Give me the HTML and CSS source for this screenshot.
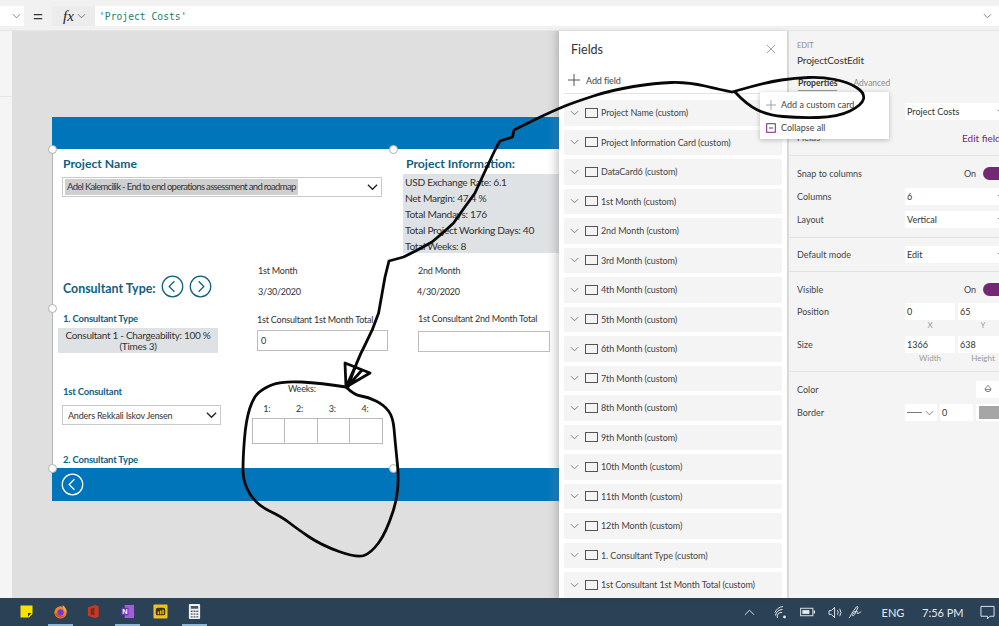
FILE: index.html
```html
<!DOCTYPE html>
<html lang="en">
<head>
<meta charset="utf-8">
<title>Project Costs</title>
<link rel="stylesheet" href="styles.css">
</head>
<body>
<div class="app">
  <header class="formula">
    <div class="prop-drop"><svg class="chev-sm" viewBox="0 0 10 6"><path d="M1 1l4 4 4-4"/></svg></div>
    <div class="equals">=</div>
    <div class="fx"><i>fx</i><svg class="chev-sm" viewBox="0 0 10 6"><path d="M1 1l4 4 4-4"/></svg></div>
    <div class="formula-input"><span>'Project Costs'</span><svg class="chev-sm" viewBox="0 0 10 6"><path d="M1 1l4 4 4-4"/></svg></div>
  </header>

  <main class="main">
    <aside class="rail"><div class="rail-top"></div></aside>

    <section class="canvas">
      <div class="form">
        <div class="form-head"></div>
        <div class="form-body">
          <div class="ctl h-name">Project Name</div>
          <div class="ctl combo combo-project"><span class="chip">Adel Kalemcilik - End to end operations assessment and roadmap</span><svg class="chev-lg" viewBox="0 0 12 8"><path d="M1 1.5l5 5 5-5"/></svg></div>
          <div class="ctl h-info">Project Information:</div>
          <div class="ctl info-box">
            <div>USD Exchange Rate: 6.1</div>
            <div>Net Margin: 47.4 %</div>
            <div>Total Mandays: 176</div>
            <div>Total Project Working Days: 40</div>
            <div>Total Weeks: 8</div>
          </div>
          <div class="ctl h-type">Consultant Type:</div>
          <svg class="ctl nav nav-prev" viewBox="0 0 24 24"><circle cx="12" cy="12" r="10.7"/><path d="M14 6.5L8.5 12l5.5 5.5"/></svg>
          <svg class="ctl nav nav-next" viewBox="0 0 24 24"><circle cx="12" cy="12" r="10.7"/><path d="M10 6.5l5.5 5.5-5.5 5.5"/></svg>
          <div class="ctl small m1">1st Month</div>
          <div class="ctl small m2">2nd Month</div>
          <div class="ctl small d1">3/30/2020</div>
          <div class="ctl small d2">4/30/2020</div>
          <div class="ctl sub s1">1. Consultant Type</div>
          <div class="ctl type-box">Consultant 1 - Chargeability: 100 %<br>(Times 3)</div>
          <div class="ctl small t1">1st Consultant 1st Month Total</div>
          <div class="ctl small t2">1st Consultant 2nd Month Total</div>
          <div class="ctl field f1">0</div>
          <div class="ctl field f2"></div>
          <div class="ctl sub s2">1st Consultant</div>
          <div class="ctl combo combo-person"><span>Anders Rekkali Iskov Jensen</span><svg class="chev-lg" viewBox="0 0 12 8"><path d="M1 1.5l5 5 5-5"/></svg></div>
          <div class="ctl small weeks">Weeks:</div>
          <div class="ctl week-grid">
            <div class="wk">1:</div><div class="wk">2:</div><div class="wk">3:</div><div class="wk">4:</div>
            <div class="cell"></div><div class="cell"></div><div class="cell"></div><div class="cell"></div>
          </div>
          <div class="ctl sub s3">2. Consultant Type</div>
        </div>
        <div class="form-foot">
          <svg class="back" viewBox="0 0 24 24"><circle cx="12" cy="12" r="10.7"/><path d="M14 6.5L8.5 12l5.5 5.5"/></svg>
        </div>
        <span class="handle hd1"></span><span class="handle hd2"></span><span class="handle hd3"></span><span class="handle hd4"></span><span class="handle hd5"></span>
      </div>
      <div class="edge-shade"></div>
    </section>

    <section class="fields">
      <div class="fields-title"><span>Fields</span><svg class="close" viewBox="0 0 12 12"><path d="M1 1l10 10M11 1L1 11"/></svg></div>
      <div class="add-field"><svg class="plus" viewBox="0 0 12 12"><path d="M6 0v12M0 6h12"/></svg><span>Add field</span></div>
      <div class="field-list">
        <div class="frow"><svg class="chev-sm" viewBox="0 0 10 6"><path d="M1 1l4 4 4-4"/></svg><b class="sq"></b><span>Project Name (custom)</span></div>
        <div class="frow"><svg class="chev-sm" viewBox="0 0 10 6"><path d="M1 1l4 4 4-4"/></svg><b class="sq"></b><span>Project Information Card (custom)</span></div>
        <div class="frow"><svg class="chev-sm" viewBox="0 0 10 6"><path d="M1 1l4 4 4-4"/></svg><b class="sq"></b><span>DataCard6 (custom)</span></div>
        <div class="frow"><svg class="chev-sm" viewBox="0 0 10 6"><path d="M1 1l4 4 4-4"/></svg><b class="sq"></b><span>1st Month (custom)</span></div>
        <div class="frow"><svg class="chev-sm" viewBox="0 0 10 6"><path d="M1 1l4 4 4-4"/></svg><b class="sq"></b><span>2nd Month (custom)</span></div>
        <div class="frow"><svg class="chev-sm" viewBox="0 0 10 6"><path d="M1 1l4 4 4-4"/></svg><b class="sq"></b><span>3rd Month (custom)</span></div>
        <div class="frow"><svg class="chev-sm" viewBox="0 0 10 6"><path d="M1 1l4 4 4-4"/></svg><b class="sq"></b><span>4th Month (custom)</span></div>
        <div class="frow"><svg class="chev-sm" viewBox="0 0 10 6"><path d="M1 1l4 4 4-4"/></svg><b class="sq"></b><span>5th Month (custom)</span></div>
        <div class="frow"><svg class="chev-sm" viewBox="0 0 10 6"><path d="M1 1l4 4 4-4"/></svg><b class="sq"></b><span>6th Month (custom)</span></div>
        <div class="frow"><svg class="chev-sm" viewBox="0 0 10 6"><path d="M1 1l4 4 4-4"/></svg><b class="sq"></b><span>7th Month (custom)</span></div>
        <div class="frow"><svg class="chev-sm" viewBox="0 0 10 6"><path d="M1 1l4 4 4-4"/></svg><b class="sq"></b><span>8th Month (custom)</span></div>
        <div class="frow"><svg class="chev-sm" viewBox="0 0 10 6"><path d="M1 1l4 4 4-4"/></svg><b class="sq"></b><span>9th Month (custom)</span></div>
        <div class="frow"><svg class="chev-sm" viewBox="0 0 10 6"><path d="M1 1l4 4 4-4"/></svg><b class="sq"></b><span>10th Month (custom)</span></div>
        <div class="frow"><svg class="chev-sm" viewBox="0 0 10 6"><path d="M1 1l4 4 4-4"/></svg><b class="sq"></b><span>11th Month (custom)</span></div>
        <div class="frow"><svg class="chev-sm" viewBox="0 0 10 6"><path d="M1 1l4 4 4-4"/></svg><b class="sq"></b><span>12th Month (custom)</span></div>
        <div class="frow"><svg class="chev-sm" viewBox="0 0 10 6"><path d="M1 1l4 4 4-4"/></svg><b class="sq"></b><span>1. Consultant Type (custom)</span></div>
        <div class="frow"><svg class="chev-sm" viewBox="0 0 10 6"><path d="M1 1l4 4 4-4"/></svg><b class="sq"></b><span>1st Consultant 1st Month Total (custom)</span></div>
      </div>
    </section>

    <aside class="props">
      <div class="props-head">
        <div class="eyebrow">EDIT</div>
        <div class="ctl-name">ProjectCostEdit</div>
        <div class="tabs"><span class="tab active">Properties</span><span class="tab">Advanced</span></div>
      </div>
      <div class="sec sec-a">
        <div class="prow"><label>Data source</label><div class="sel">Project Costs<svg class="chev-xs" viewBox="0 0 10 6"><path d="M1 1l4 4 4-4"/></svg></div></div>
        <div class="prow"><label>Fields</label><a class="edit-link">Edit fields</a></div>
      </div>
      <div class="sec">
        <div class="prow"><label>Snap to columns</label><div class="toggle-wrap"><span>On</span><b class="toggle"></b></div></div>
        <div class="prow"><label>Columns</label><div class="sel">6<svg class="chev-xs" viewBox="0 0 10 6"><path d="M1 1l4 4 4-4"/></svg></div></div>
        <div class="prow"><label>Layout</label><div class="sel">Vertical<svg class="chev-xs" viewBox="0 0 10 6"><path d="M1 1l4 4 4-4"/></svg></div></div>
      </div>
      <div class="sec sec-c">
        <div class="prow"><label>Default mode</label><div class="sel">Edit<svg class="chev-xs" viewBox="0 0 10 6"><path d="M1 1l4 4 4-4"/></svg></div></div>
      </div>
      <div class="sec sec-d">
        <div class="prow"><label>Visible</label><div class="toggle-wrap"><span>On</span><b class="toggle"></b></div></div>
        <div class="prow pair"><label>Position</label><div class="pair-fields"><div class="num">0<small>X</small></div><div class="num">65<small>Y</small></div></div></div>
        <div class="prow pair"><label>Size</label><div class="pair-fields"><div class="num">1366<small>Width</small></div><div class="num">638<small>Height</small></div></div></div>
      </div>
      <div class="sec sec-e">
        <div class="prow"><label>Color</label><div class="color-btn"><svg viewBox="0 0 12 12"><path d="M6 1.5l3.5 4.2a3.4 3.4 0 1 1-7 0z M3 6.5h6"/></svg></div></div>
        <div class="prow"><label>Border</label><div class="border-tools"><div class="line-sel"><i></i><svg class="chev-sm" viewBox="0 0 10 6"><path d="M1 1l4 4 4-4"/></svg></div><div class="border-num">0</div><div class="swatch-box"><b></b></div></div></div>
      </div>
    </aside>

    <div class="popup">
      <div class="pop-item"><svg class="plus plus-grey" viewBox="0 0 12 12"><path d="M6 0v12M0 6h12"/></svg><span>Add a custom card</span></div>
      <div class="pop-item"><svg class="collapse" viewBox="0 0 10 10"><rect x="0.7" y="0.7" width="8.6" height="8.6"/><path d="M3 5h4"/></svg><span>Collapse all</span></div>
    </div>
  </main>

  <footer class="taskbar">
    <div class="task-apps">
      <div class="tapp"><svg viewBox="-1.5 -1.5 15 15"><path fill="#f7e200" d="M0 0h12v8.5L8.500 12H0z"/><path fill="#2b2b1c" d="M7.500 7.500H11L7.500 11z"/></svg></div>
      <div class="tapp on"><svg viewBox="0 0 16 16"><circle cx="8" cy="9" r="6.5" fill="#f5832a"/><path fill="#ffb02e" d="M10 1c3 2 5 5 4.500 8L11 5z"/><circle cx="8" cy="9" r="3.400" fill="#6a3fc4"/><path fill="#e8462f" d="M2 11c2 4 8 5 11 1-3 1.500-7 1-8-3z"/></svg></div>
      <div class="tapp"><svg viewBox="0 0 14 16"><path fill="#c8391f" d="M1 3.500L8.500 1l4 1.500v11l-4 1.500L1 12.500z"/><path fill="#7d2a1e" d="M4 5l4-1v8l-4-1z"/></svg></div>
      <div class="tapp on"><svg viewBox="0 0 16 16"><path fill="#a45fd8" d="M5 1h10v14H5z"/><path fill="#6f2da8" d="M1 4h8v8H1z"/><text x="2.500" y="10.500" class="n-letter">N</text></svg></div>
      <div class="tapp"><svg viewBox="0 0 16 16"><rect x="0.500" y="0.500" width="15" height="15" rx="1" fill="#eec21c"/><rect x="3" y="4" width="10" height="8" rx="2" fill="#3d3418"/><path fill="#eec21c" d="M5 8h1.500v3H5zM7.500 7H9v4H7.500zM10 6h1.500v5H10z"/></svg></div>
      <div class="tapp on"><svg viewBox="0 0 12 16"><rect width="12" height="16" rx="1" fill="#f1f1f1"/><path fill="#4a5a68" d="M2 2h8v3H2zM2 7h2v1.500H2zM5 7h2v1.500H5zM8 7h2v1.500H8zM2 10h2v1.500H2zM5 10h2v1.500H5zM8 10h2v1.500H8zM2 13h2v1.500H2zM5 13h2v1.500H5zM8 13h2v1.500H8z"/></svg></div>
    </div>
    <div class="tray">
      <svg class="tray-chev" viewBox="0 0 12 7"><path d="M1 6l5-5 5 5"/></svg>
      <svg class="tray-wifi" viewBox="0 0 14 14"><path d="M1 7.500A10 10 0 0 1 9 1.500M1.500 10.500A7 7 0 0 1 8.500 4.500M3.500 13A4 4 0 0 1 8 7.500"/><circle cx="10.500" cy="12" r="1.400"/></svg>
      <svg class="tray-batt" viewBox="0 0 16 10"><rect x="0.700" y="1" width="13" height="8"/><path class="fill" d="M2.500 3h7.500v4H2.500z"/><path class="fill" d="M14.500 3.500H16v3h-1.500z"/></svg>
      <svg class="tray-vol" viewBox="0 0 16 14"><path d="M1 5h2.500L7 1.500v11L3.500 9H1zM10 4.500a4 4 0 0 1 0 5M12.500 3a7 7 0 0 1 0 8"/></svg>
      <svg class="tray-pen" viewBox="0 0 16 16"><path d="M1 14c1-1 2-3 3-5l5-7c1-1 2 0 1.500 1L7 10c-1 2-3 2-2 0 1-3 4-4 5-3 .5 1-1 2 0 2s3-1 4-2"/></svg>
      <span class="lang">ENG</span>
      <span class="clock">7:56 PM</span>
      <svg class="tray-note" viewBox="0 0 16 16"><path d="M1 1.500h14v10.500h-4.500L8 14.800 8 12H1z"/></svg>
    </div>
  </footer>

  <svg class="scribble" viewBox="0 0 999 626">
    <path d="M735 92Q747 105 757.500 110Q768 115 783 116.500Q798 118 818 117.500Q838 117 850 111Q862 105 863.500 99Q865 93 856.500 87.500Q848 82 835 79.500Q822 77 808.500 77.500Q795 78 781.500 80Q768 82 750 87L732 92Q722 90 705 86Q688 82 671.500 82.500Q655 83 633.500 86.500Q612 90 593.500 96Q575 102 565 106Q555 110 534 120L514 130L512.500 137L500 141L495 150Q485 171 475 193Q464 208 453.600 223Q443 233 432 242Q418 250 403.600 257L389 261L385 277L378.600 313Q373 330 365 345Q357 360 348 387"/>
    <path d="M345 363L370 373L346 387ZM355 367L346 387M362 370L347 387"/>
    <path d="M346 387Q321 383 301.500 382Q282 381 273 384.500Q264 388 258.750 392.500Q253.500 397 249.750 408.500Q246 420 244.500 438.500Q243 457 243 470Q243 483 250 494Q257 505 269.500 511Q282 517 289 522.500Q296 528 308.500 536.500Q321 545 339 551.500Q357 558 364 555.500Q371 553 378.500 543Q386 533 393 511.500Q400 490 397.500 465Q395 440 394 428.500Q393 417 388.500 411Q384 405 376 401Q368 397 361 396Q354 395 346 387"/>
  </svg>
</div>
</body>
</html>
```

FILE: styles.css
```css
* { box-sizing: border-box; }
html, body { margin: 0; height: 100%; overflow: hidden; }
body { font-family: Lato, "Open Sans", sans-serif; color: #333; background: #f3f3f3; }
.app { position: relative; width: 999px; height: 626px; display: flex; flex-direction: column; overflow: hidden; }
svg { display: block; }
.chev-sm { width: 9px; height: 6px; flex: none; fill: none; stroke: #777; stroke-width: 1; }
.chev-xs { width: 8px; height: 5px; flex: none; fill: none; stroke: #666; stroke-width: 1; }
.chev-lg { width: 11px; height: 8px; flex: none; fill: none; stroke: #222; stroke-width: 1.4; }

/* formula bar */
.formula { height: 31px; flex: none; display: flex; align-items: stretch; padding: 6px 0 4px; background: #f1f1f1; border-bottom: 1px solid #e6e6e6; }
.prop-drop { width: 24px; background: #fff; display: flex; align-items: center; justify-content: flex-end; padding-right: 3px; }
.equals { width: 28px; text-align: center; font: 17px/21px "Liberation Sans", sans-serif; color: #333; }
.fx { width: 43px; display: flex; align-items: center; gap: 3px; padding-left: 11px; background: #ececec; }
.fx i { font: italic 15px/1 "Liberation Serif", serif; color: #222; }
.formula-input { flex: 1; display: flex; align-items: center; justify-content: space-between; padding: 0 7px 0 4px; background: #fff; font: 9.7px "DejaVu Sans Mono", monospace; color: #1f7a6d; }

/* main */
.main { position: relative; flex: 1; min-height: 0; display: flex; }
.rail { width: 12px; flex: none; background: #f5f5f5; }
.rail-top { height: 66px; border-bottom: 1px solid #e6e6e6; }

.canvas { position: relative; width: 547px; flex: none; background: #dfdfdf; overflow: hidden; }
.form { position: relative; margin: 86px 0 0 40px; width: 507px; }
.form-head { height: 32px; background: #0075ba; }
.form-body { position: relative; height: 319px; background: #fff; border-left: 1px solid #b5b5b5; }
.form-foot { height: 33px; background: #0075ba; padding: 5px 0 0 9px; }
.back { width: 23px; height: 23px; fill: none; stroke: #fff; stroke-width: 1.300; }
.edge-shade { position: absolute; right: 0; top: 0; bottom: 0; width: 12px; background: linear-gradient(to right, rgba(150,150,150,0), rgba(150,150,150,.22)); }
.handle { position: absolute; width: 9px; height: 9px; border-radius: 50%; background: #fff; border: 1px solid #b0b0b0; }
.hd1 { left: -4px; top: 28px; }
.hd2 { left: 337px; top: 28px; }
.hd3 { left: -4px; top: 187px; }
.hd4 { left: -4px; top: 347px; }
.hd5 { left: 337px; top: 347px; }

/* free-canvas controls */
.ctl { position: absolute; white-space: nowrap; }
.h-name, .h-info, .h-type { font-weight: 700; color: #11607f; font-size: 12.200px; line-height: 16px; }
.h-name { left: 10px; top: 7px; }
.h-info { left: 353px; top: 7px; }
.h-type { left: 10px; top: 132px; font-size: 12.400px; }
.combo { display: flex; align-items: center; justify-content: space-between; background: #fff; border: 1px solid #c9c9c9; padding-right: 3px; color: #333; }
.combo-project { left: 9px; top: 28px; width: 320px; height: 20px; padding-left: 2px; font-size: 9.500px; letter-spacing: -.68px; }
.chip { background: #cfcfcf; padding: 2px; line-height: 12px; white-space: nowrap; }
.info-box { left: 350px; top: 25px; width: 157px; height: 79px; background: #dfe2e4; padding: 0 2px; font-size: 10.200px; letter-spacing: -.3px; line-height: 16px; color: #333; }
.nav { width: 23px; height: 23px; fill: none; stroke: #11607f; stroke-width: 1.300; top: 125.500px; }
.nav-prev { left: 108px; }
.nav-next { left: 136px; }
.small { font-size: 9px; letter-spacing: -.2px; line-height: 12px; color: #333; }
.m1 { left: 205px; top: 116px; }
.m2 { left: 365px; top: 116px; }
.d1 { left: 205px; top: 137px; }
.d2 { left: 364px; top: 137px; }
.t1 { left: 204px; top: 165px; }
.t2 { left: 365px; top: 164px; }
.sub { font-weight: 700; color: #11607f; font-size: 9.500px; letter-spacing: -.2px; line-height: 12px; }
.s1 { left: 10px; top: 164px; }
.s2 { left: 10px; top: 237px; }
.s3 { left: 10px; top: 305px; }
.type-box { left: 5px; top: 179px; width: 160px; height: 25px; background: #dfe2e4; text-align: center; font-size: 10px; letter-spacing: -.3px; line-height: 11px; padding-top: 2px; color: #333; }
.field { height: 21px; background: #fff; border: 1px solid #bdbdbd; font-size: 9px; line-height: 19px; padding-left: 3px; }
.f1 { left: 204px; top: 181px; width: 131px; }
.f2 { left: 365px; top: 182px; width: 132px; }
.combo-person { left: 9px; top: 256px; width: 159px; height: 20px; padding-left: 5px; font-size: 9px; letter-spacing: -.2px; }
.weeks { left: 235px; top: 234px; }
.week-grid { left: 199px; top: 254px; width: 131px; display: grid; grid-template-columns: repeat(4, 1fr); }
.wk { font-size: 9px; line-height: 12px; height: 15px; text-align: center; color: #333; padding-right: 3px; }
.cell { height: 26px; border: 1px solid #b9b9b9; border-left-width: 0; }
.cell:nth-child(5) { border-left-width: 1px; }

/* fields panel */
.fields { width: 228px; flex: none; background: #fff; box-shadow: -2px 0 5px rgba(0,0,0,.1); display: flex; flex-direction: column; overflow: hidden; font-size: 9px; letter-spacing: -.1px; color: #444; z-index: 1; }
.fields-title { height: 36px; flex: none; display: flex; align-items: center; justify-content: space-between; padding: 0 11px 0 12px; font-size: 12.500px; letter-spacing: 0; color: #333; }
.close { width: 10px; height: 10px; fill: none; stroke: #888; stroke-width: .9; }
.add-field { height: 27px; flex: none; margin: 0 5px 0; padding-left: 4px; display: flex; align-items: center; gap: 6px; border-bottom: 1px solid #e4e4e4; }
.plus { width: 12px; height: 12px; fill: none; stroke: #444; stroke-width: .9; }
.plus-grey { stroke: #888; }
.field-list { margin-top: 6px; padding: 0 5px; display: grid; grid-auto-rows: 25.500px; row-gap: 4px; }
.frow { display: flex; align-items: center; background: #f4f4f4; border-radius: 2px; padding-left: 6px; }
.sq { width: 13px; height: 10px; margin: 0 3px 0 6px; border: 1px solid #555; flex: none; }

/* properties */
.props { width: 212px; flex: none; background: #f4f4f4; border-left: 2px solid #dcdcdc; overflow: hidden; font-size: 9px; color: #444; }
.props-head { height: 61px; padding: 10px 0 0 8px; }
.eyebrow { font-size: 7.500px; line-height: 10px; color: #8a8a8a; }
.ctl-name { font-size: 10px; letter-spacing: -.1px; line-height: 18px; color: #333; }
.tabs { display: flex; gap: 16px; margin-top: 7px; font-size: 8.500px; line-height: 14px; color: #8a8a8a; padding-left: 1px; }
.tab.active { font-weight: 700; color: #333; border-bottom: 1px solid #999; height: 15px; }
.sec { padding: 9px 0 9px 8px; border-bottom: 1px solid #e1e1e1; display: flex; flex-direction: column; gap: 6px; }
.sec-a { padding-top: 11px; gap: 9px; }
.sec-c { padding-top: 8px; padding-bottom: 8px; }
.sec-d { padding-bottom: 7px; gap: 5px; }
.sec-e { border-bottom: 0; }
.prow { display: flex; align-items: center; height: 17px; }
.prow label { width: 108px; flex: none; }
.sel { width: 103px; height: 17px; flex: none; background: #fff; display: flex; align-items: center; justify-content: space-between; padding: 0 3px 0 2px; color: #333; }
.edit-link { width: 57px; margin-left: 57px; flex: none; color: #742774; font-size: 10px; white-space: nowrap; }
.toggle-wrap { margin-left: 59px; display: flex; align-items: center; gap: 7px; }
.toggle { display: block; width: 30px; height: 13px; border-radius: 7px; background: #742774; flex: none; }
.pair { height: 28px; align-items: flex-start; }
.pair label { line-height: 17px; }
.pair-fields { display: flex; gap: 3px; flex: none; }
.num { width: 50px; height: 17px; background: #fff; line-height: 17px; padding-left: 2px; color: #333; position: relative; }
.num small { position: absolute; left: 0; right: 0; top: 17px; line-height: 11px; font-size: 8px; text-align: center; color: #999; }
.color-btn { margin-left: 71px; width: 30px; height: 17px; background: #fff; padding: 3px 0 0 7px; }
.color-btn svg { width: 10px; height: 10px; fill: none; stroke: #555; stroke-width: .9; }
.border-tools { display: flex; gap: 3px; flex: none; }
.line-sel { width: 32px; height: 17px; background: #fff; display: flex; align-items: center; gap: 3px; padding-left: 2px; }
.line-sel i { width: 15px; height: 1px; background: #777; }
.border-num { width: 33px; height: 17px; background: #fff; line-height: 17px; padding-left: 2px; color: #333; }
.swatch-box { width: 32px; height: 17px; background: #fff; padding: 2px 3px; }
.swatch-box b { display: block; height: 13px; background: #a6a6a6; }

/* popup */
.popup { position: absolute; left: 760px; top: 61px; width: 129px; height: 47px; z-index: 2; background: #fff; box-shadow: 0 1px 5px rgba(0,0,0,.25); display: grid; grid-auto-rows: 23px; padding-top: 1px; font-size: 9px; color: #444; }
.pop-item { display: flex; align-items: center; padding-left: 6px; gap: 5px; }
.pop-item .plus { width: 10px; height: 10px; }
.collapse { width: 10px; height: 10px; fill: none; stroke: #742774; stroke-width: 1; }

/* taskbar */
.taskbar { height: 28px; flex: none; background: #2b4156; display: flex; justify-content: space-between; color: #e6ebef; }
.task-apps { display: flex; padding-left: 10px; }
.tapp { position: relative; width: 33.500px; display: flex; align-items: center; justify-content: center; padding-bottom: 1px; }
.tapp svg { height: 15px; width: 15px; }
.tapp.on::after { content: ""; position: absolute; left: 4px; right: 4px; bottom: 0; height: 2px; background: #87b7dc; }
.n-letter { font: 700 8px "Liberation Sans", sans-serif; fill: #fff; }
.tray { display: flex; align-items: center; padding-right: 4px; font-size: 11px; }
.tray svg { flex: none; fill: none; stroke: #e6ebef; stroke-width: 1; }
.tray-chev { width: 11px; height: 7px; margin-right: 19px; }
.tray-wifi { width: 14px; height: 14px; margin-right: 12px; }
.tray-wifi circle, .tray-batt .fill { fill: #e6ebef; stroke: none; }
.tray-batt { width: 15px; height: 10px; margin-right: 13px; }
.tray-vol { width: 15px; height: 13px; margin-right: 5px; }
.tray-pen { width: 15px; height: 15px; margin-right: 14px; }
.lang { width: 32px; margin-right: 13px; text-align: center; }
.clock { width: 40px; margin-right: 18px; white-space: nowrap; }
.tray-note { width: 15px; height: 15px; }

/* hand-drawn annotation */
.scribble { position: absolute; left: 0; top: 0; width: 999px; height: 626px; z-index: 5; pointer-events: none; fill: none; stroke: #080808; stroke-width: 2.800; stroke-linecap: round; stroke-linejoin: round; }
```
